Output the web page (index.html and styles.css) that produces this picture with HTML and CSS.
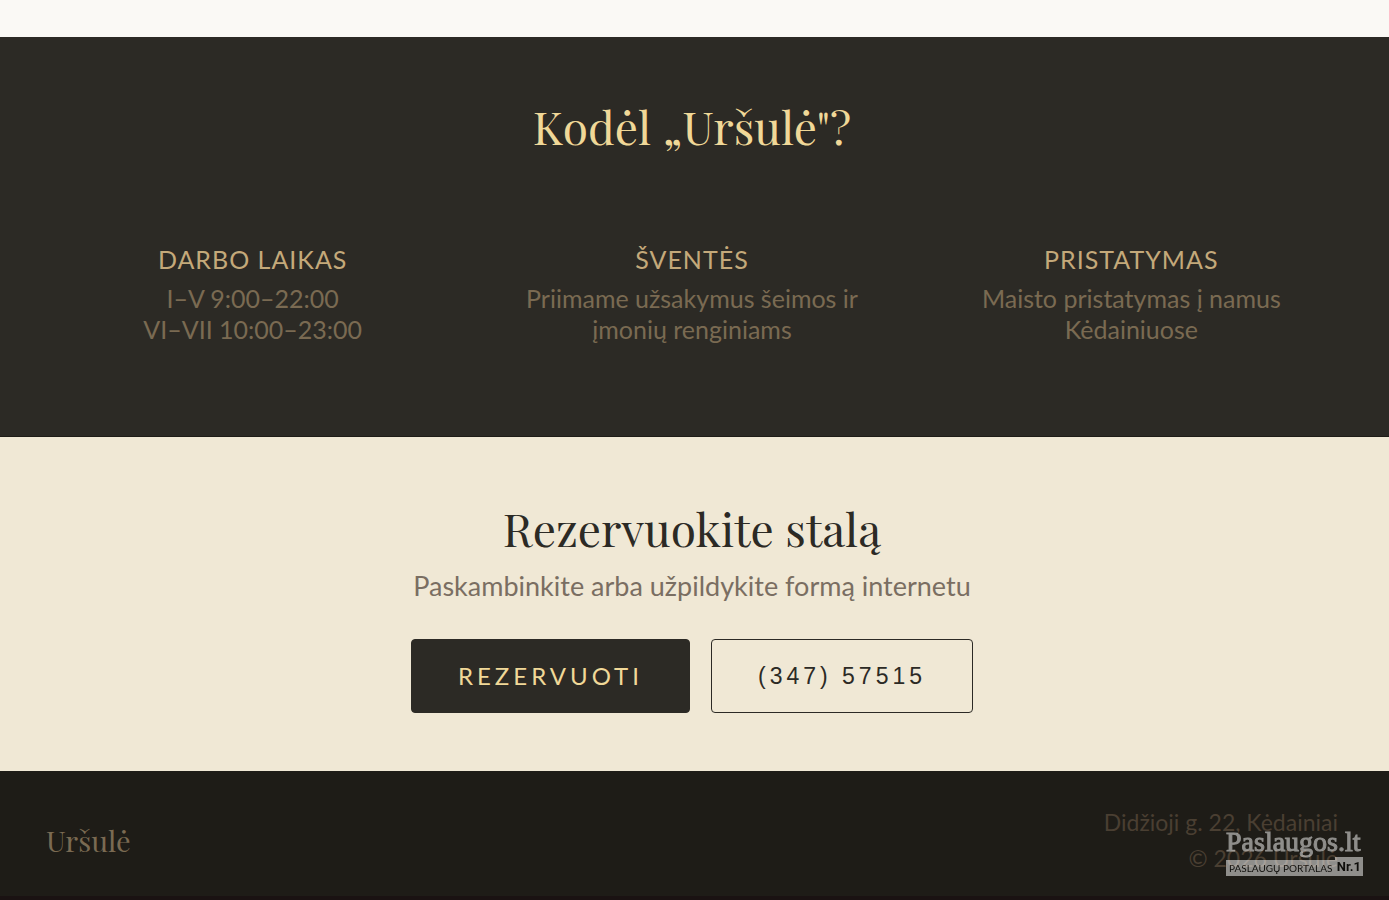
FILE: index.html
```html
<!DOCTYPE html>
<html lang="lt">
<head>
<meta charset="utf-8">
<meta name="viewport" content="width=device-width, initial-scale=1">
<title>Uršulė</title>
<link rel="stylesheet" href="styles.css">
</head>
<body>
<main>
  <section class="why">
    <h2 class="title title-gold">Kodėl „Uršulė"?</h2>
    <div class="features">
      <article class="feature">
        <h3 class="feature-name">Darbo laikas</h3>
        <p class="feature-text">I–V 9:00–22:00<br>VI–VII 10:00–23:00</p>
      </article>
      <article class="feature">
        <h3 class="feature-name">Šventės</h3>
        <p class="feature-text">Priimame užsakymus šeimos ir įmonių renginiams</p>
      </article>
      <article class="feature">
        <h3 class="feature-name">Pristatymas</h3>
        <p class="feature-text">Maisto pristatymas į namus Kėdainiuose</p>
      </article>
    </div>
  </section>
  <section class="reserve">
    <h2 class="title">Rezervuokite stalą</h2>
    <p class="lead">Paskambinkite arba užpildykite formą internetu</p>
    <div class="actions">
      <button class="btn btn-solid" type="button">REZERVUOTI</button>
      <a class="btn btn-line" href="tel:+37034757515">(347) 57515</a>
    </div>
  </section>
</main>
<footer class="footer">
  <div class="brand">Uršulė</div>
  <p class="address">Didžioji g. 22, Kėdainiai<br>© 2026 Uršulė</p>
</footer>
<div class="badge">
  <span class="badge-name">Paslaugos.lt</span>
  <span class="badge-bar"><span class="badge-sub">PASLAUGŲ PORTALAS</span><b class="badge-rank">Nr.1</b></span>
</div>
</body>
</html>
```
FILE: styles.css
```css
* { box-sizing: border-box; }
body {
  margin: 0;
  padding-top: 37px;
  background: #faf9f5;
  font-family: Lato, "Open Sans", sans-serif;
}
h2, h3, p { margin: 0; font-weight: 400; }

.why {
  padding: 58px 51px 91px 46px;
  background: #2c2a25;
  border-bottom: 1px solid #1e1c17;
}
.title {
  font-family: "Playfair Display", "Liberation Serif", serif;
  font-size: 46px;
  line-height: 62px;
  text-align: center;
  color: #2c2a25;
}
.title-gold { color: #f0d898; }
.features {
  display: grid;
  grid-template-columns: repeat(3, 1fr);
  gap: 26px;
  margin-top: 85px;
}
.feature { padding: 0 40px; text-align: center; }
.feature-name {
  font-size: 25px;
  line-height: 34px;
  letter-spacing: 1px;
  text-transform: uppercase;
  color: #c4a97a;
}
.feature-text {
  margin-top: 7px;
  font-size: 25px;
  line-height: 31px;
  color: #7a6a52;
}

.reserve {
  padding: 60px 51px 58px 46px;
  background: #f0e8d5;
  text-align: center;
}
.lead {
  margin-top: 10px;
  font-size: 27px;
  line-height: 34px;
  color: #7a6e62;
}
.actions {
  display: flex;
  justify-content: center;
  gap: 21px;
  margin-top: 36px;
}
.btn {
  padding: 20px 46px;
  border: 1px solid #2c2a25;
  border-radius: 4px;
  line-height: 32px;
  letter-spacing: 4px;
  text-decoration: none;
}
.btn-solid { background: #2c2a25; color: #f0d898; font-family: Lato, sans-serif; font-size: 24px; }
.btn-line { color: #2c2a25; font-family: "Liberation Sans", sans-serif; font-size: 23px; }

.footer {
  display: flex;
  align-items: center;
  justify-content: space-between;
  padding: 33px 51px 20px 46px;
  background: #1e1c17;
  border-bottom: 4px solid #1a1212;
}
.brand {
  font-family: "Playfair Display", "Liberation Serif", serif;
  font-size: 29px;
  line-height: 40px;
  color: #7a6a52;
}
.address {
  font-size: 23px;
  line-height: 36px;
  text-align: right;
  color: #4a3f32;
}

.badge {
  position: fixed;
  right: 26px;
  bottom: 24px;
  width: 137px;
  display: flex;
  flex-direction: column;
  color: #fff;
  opacity: 0.5;
}
.badge-name {
  font: 28px/30px "Liberation Serif", serif;
  -webkit-text-stroke: 1px #fff;
  white-space: nowrap;
}
.badge-bar {
  display: flex;
  align-items: flex-end;
  color: #000;
}
.badge-sub {
  flex: 1;
  padding-left: 3px;
  background: #fff;
  font: 10px/16px Lato, sans-serif;
  white-space: nowrap;
}
.badge-rank {
  padding: 0 2px;
  background: #fff;
  font: bold 13px/19px Roboto, sans-serif;
}
```
